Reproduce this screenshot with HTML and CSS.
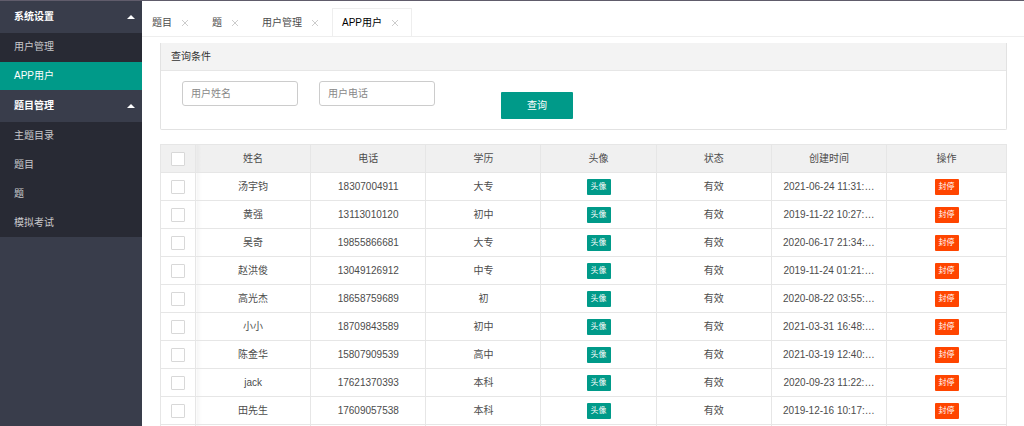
FILE: index.html
```html
<!DOCTYPE html>
<html lang="zh-CN">
<head>
<meta charset="utf-8">
<meta name="viewport" content="width=device-width, initial-scale=1">
<title>APP用户</title>
<link rel="stylesheet" href="styles.css">
</head>
<body>
<svg class="symbols" aria-hidden="true">
  <symbol id="close" viewBox="0 0 10 10"><path d="M2 2L8 8M8 2L2 8" fill="none" stroke="currentColor"/></symbol>
  <symbol id="caret" viewBox="0 0 8 4"><path d="M0 4L4 0L8 4Z" fill="currentColor"/></symbol>
</svg>
<div class="app">
  <nav class="sidebar">
    <button class="menu-title" type="button">系统设置<svg class="caret"><use href="#caret"/></svg></button>
    <div class="submenu">
      <a class="menu-link" href="#">用户管理</a>
      <a class="menu-link active" href="#">APP用户</a>
    </div>
    <button class="menu-title" type="button">题目管理<svg class="caret"><use href="#caret"/></svg></button>
    <div class="submenu">
      <a class="menu-link" href="#">主题目录</a>
      <a class="menu-link" href="#">题目</a>
      <a class="menu-link" href="#">题</a>
      <a class="menu-link" href="#">模拟考试</a>
    </div>
  </nav>
  <main class="main">
    <div class="tabs">
      <div class="tab"><a href="#">题目</a><button class="close" type="button" aria-label="关闭"><svg><use href="#close"/></svg></button></div>
      <div class="tab"><a href="#">题</a><button class="close" type="button" aria-label="关闭"><svg><use href="#close"/></svg></button></div>
      <div class="tab"><a href="#">用户管理</a><button class="close" type="button" aria-label="关闭"><svg><use href="#close"/></svg></button></div>
      <div class="tab current"><a href="#">APP用户</a><button class="close" type="button" aria-label="关闭"><svg><use href="#close"/></svg></button></div>
    </div>
    <div class="content">
      <section class="panel">
        <h2 class="panel-title">查询条件</h2>
        <form class="search">
          <input class="field" type="text" placeholder="用户姓名" aria-label="用户姓名">
          <input class="field" type="text" placeholder="用户电话" aria-label="用户电话">
          <button class="submit" type="button">查询</button>
        </form>
      </section>
      <table class="users">
        <colgroup><col class="col-check"><col><col><col><col><col><col><col class="col-action"></colgroup>
        <thead>
          <tr><th><input class="check" type="checkbox" aria-label="全选"></th><th>姓名</th><th>电话</th><th>学历</th><th>头像</th><th>状态</th><th>创建时间</th><th>操作</th></tr>
        </thead>
        <tbody>
          <tr><td><input class="check" type="checkbox" aria-label="选择"></td><td>汤宇钧</td><td>18307004911</td><td>大专</td><td><button class="tag" type="button">头像</button></td><td>有效</td><td>2021-06-24 11:31:…</td><td><button class="tag danger" type="button">封停</button></td></tr>
          <tr><td><input class="check" type="checkbox" aria-label="选择"></td><td>黄强</td><td>13113010120</td><td>初中</td><td><button class="tag" type="button">头像</button></td><td>有效</td><td>2019-11-22 10:27:…</td><td><button class="tag danger" type="button">封停</button></td></tr>
          <tr><td><input class="check" type="checkbox" aria-label="选择"></td><td>吴奇</td><td>19855866681</td><td>大专</td><td><button class="tag" type="button">头像</button></td><td>有效</td><td>2020-06-17 21:34:…</td><td><button class="tag danger" type="button">封停</button></td></tr>
          <tr><td><input class="check" type="checkbox" aria-label="选择"></td><td>赵洪俊</td><td>13049126912</td><td>中专</td><td><button class="tag" type="button">头像</button></td><td>有效</td><td>2019-11-24 01:21:…</td><td><button class="tag danger" type="button">封停</button></td></tr>
          <tr><td><input class="check" type="checkbox" aria-label="选择"></td><td>高光杰</td><td>18658759689</td><td>初</td><td><button class="tag" type="button">头像</button></td><td>有效</td><td>2020-08-22 03:55:…</td><td><button class="tag danger" type="button">封停</button></td></tr>
          <tr><td><input class="check" type="checkbox" aria-label="选择"></td><td>小小</td><td>18709843589</td><td>初中</td><td><button class="tag" type="button">头像</button></td><td>有效</td><td>2021-03-31 16:48:…</td><td><button class="tag danger" type="button">封停</button></td></tr>
          <tr><td><input class="check" type="checkbox" aria-label="选择"></td><td>陈金华</td><td>15807909539</td><td>高中</td><td><button class="tag" type="button">头像</button></td><td>有效</td><td>2021-03-19 12:40:…</td><td><button class="tag danger" type="button">封停</button></td></tr>
          <tr><td><input class="check" type="checkbox" aria-label="选择"></td><td>jack</td><td>17621370393</td><td>本科</td><td><button class="tag" type="button">头像</button></td><td>有效</td><td>2020-09-23 11:22:…</td><td><button class="tag danger" type="button">封停</button></td></tr>
          <tr><td><input class="check" type="checkbox" aria-label="选择"></td><td>田先生</td><td>17609057538</td><td>本科</td><td><button class="tag" type="button">头像</button></td><td>有效</td><td>2019-12-16 10:17:…</td><td><button class="tag danger" type="button">封停</button></td></tr>
          <tr><td></td><td></td><td></td><td></td><td></td><td></td><td></td><td></td></tr>
        </tbody>
      </table>
    </div>
  </main>
</div>
</body>
</html>
```
FILE: styles.css
```css
* { box-sizing: border-box; }

body {
  margin: 0;
  background: #fff;
  color: #4c4c4c;
  font: 10px/16px "Liberation Sans", "Noto Sans CJK SC", sans-serif;
}

a { color: inherit; text-decoration: none; }
button, input { font: inherit; }
button { padding: 0; border: 0; cursor: pointer; }

.symbols { display: none; }

.app {
  display: flex;
  height: 100vh;
  overflow: hidden;
  border-top: 1px solid #605c6b;
}

/* Sidebar */
.sidebar {
  flex: 0 0 142px;
  background: #393d4b;
  color: #fff;
}

.menu-title {
  display: flex;
  align-items: center;
  justify-content: space-between;
  width: 100%;
  height: 32px;
  padding: 0 7px 0 14px;
  background: none;
  color: #fff;
  font-weight: 700;
}

.caret { width: 8px; height: 4px; }

.submenu {
  display: grid;
  gap: 1px;
  background: #282a34;
}

.menu-link {
  padding: 0 14px;
  color: #c8c9cc;
  line-height: 28px;
}

.menu-link.active { background: #009a89; color: #fff; }

/* Tabs */
.main { flex: 1; min-width: 0; }

.tabs {
  display: flex;
  align-items: flex-end;
  height: 36px;
  border-bottom: 1px solid #eee;
}

.tab {
  display: flex;
  align-items: center;
  gap: 8px;
  height: 28px;
  padding: 0 12px 0 10px;
  border-top: 1px solid transparent;
}

.tab.current {
  border-color: #eee;
  box-shadow: inset 1px 0 #eee, inset -1px 0 #eee;
  background: #fff;
  color: #000;
}

.close {
  display: flex;
  background: none;
  color: #ccc;
}

.close svg { width: 10px; height: 10px; }

/* Search panel */
.content { padding: 6px 17px 0 18px; }

.panel {
  margin-bottom: 14px;
  border: 1px solid #e2e2e2;
  border-top: 0;
  border-radius: 0 0 2px 2px;
}

.panel-title {
  margin: 0;
  padding: 0 10px;
  border-bottom: 1px solid #e6e6e6;
  background: #f3f3f3;
  color: #333;
  font-size: 10px;
  font-weight: 400;
  line-height: 27px;
}

.search {
  display: flex;
  align-items: flex-start;
  gap: 21px;
  padding: 10px 21px;
}

.field {
  width: 116px;
  height: 25px;
  padding: 0 8px;
  border: 1px solid #ccc;
  border-radius: 3px;
  background: #fff;
  color: #555;
}

.field::placeholder { color: #888; opacity: 1; }

.submit {
  width: 72px;
  height: 27px;
  margin: 11px 0 0 45px;
  border-radius: 1px;
  background: #009a89;
  color: #fff;
}

/* User table */
.users {
  width: 100%;
  border-collapse: collapse;
  table-layout: fixed;
  text-align: center;
}

.col-check { width: 35px; }
.col-action { width: 120px; }

.users th,
.users td {
  height: 28px;
  padding: 0;
  border: 1px solid #e6e6e6;
  font-weight: 400;
  white-space: nowrap;
}

.users th { background: #f0f0f0; }

.users td:nth-child(2) { background: linear-gradient(to right, #f5f5f5, #fff 5px); }
.users th:nth-child(2) { background: linear-gradient(to right, #e8e8e8, #f0f0f0 5px); }

.check {
  display: block;
  width: 14px;
  height: 14px;
  margin: 0 auto;
  border: 1px solid #d8d8d8;
  border-radius: 1px;
  background: #fff;
  appearance: none;
}

.check:checked { border-color: #009a89; background: #009a89; }

.tag {
  display: block;
  width: 24px;
  height: 16px;
  margin: 0 auto;
  border-radius: 1px;
  background: #009a89;
  color: #fff;
  font-size: 8px;
  line-height: 16px;
}

.tag.danger { background: #ff4500; }
```
